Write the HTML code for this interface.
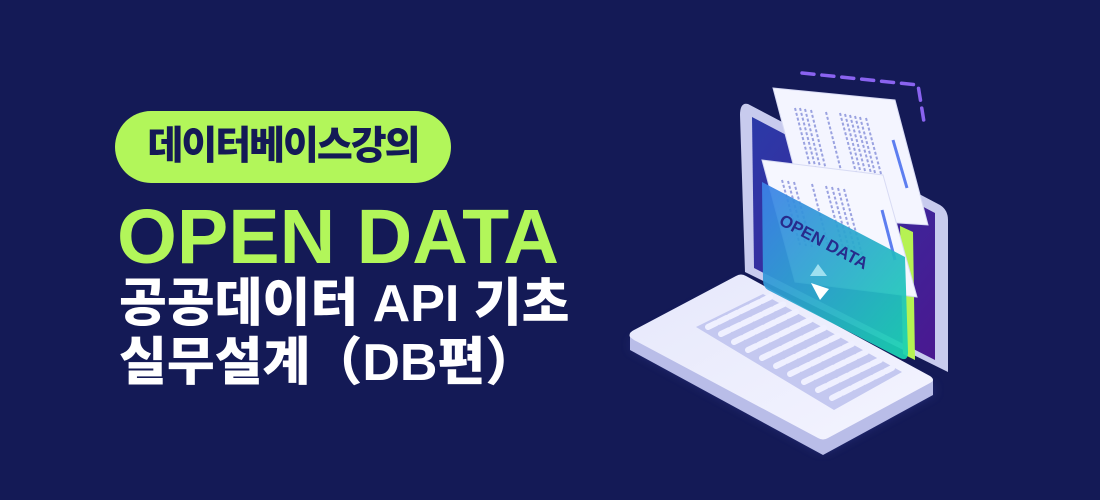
<!DOCTYPE html>
<html><head><meta charset="utf-8"><style>
html,body{margin:0;padding:0}
body{width:1100px;height:500px;background:#141a56;position:relative;overflow:hidden;font-family:"Liberation Sans","Noto Sans CJK KR",sans-serif}
.pill{position:absolute;left:115px;top:111px;width:336px;height:72px;border-radius:36px;background:#b2f65a;color:#141a56;font-weight:900;font-size:39px;line-height:72px;text-align:center;letter-spacing:-2px}
.big{position:absolute;left:117px;top:192px;color:#b2f65a;font-weight:bold;font-size:77px;line-height:90px;white-space:nowrap}
.k{position:absolute;left:119px;color:#fff;font-weight:900;font-size:52px;line-height:58px;white-space:nowrap;letter-spacing:0px}
svg{position:absolute;left:0;top:0}
</style></head><body>
<div class="pill">데이터베이스강의</div>
<div class="big">OPEN DATA</div>
<div class="k" style="top:275px">공공데이터 API 기초</div>
<div class="k" style="top:334px">실무설계（DB편）</div>
<svg width="1100" height="500" viewBox="0 0 1100 500">
<defs>
<linearGradient id="scr" x1="0" y1="0" x2="1" y2="1"><stop offset="0" stop-color="#2b3aa8"/><stop offset="1" stop-color="#4a1890"/></linearGradient>
<linearGradient id="fold" x1="0" y1="0" x2="1" y2="1"><stop offset="0" stop-color="#3d80e8"/><stop offset="1" stop-color="#18d6b0"/></linearGradient>
<linearGradient id="base" x1="0" y1="0" x2="1" y2="1"><stop offset="0" stop-color="#e6e8fb"/><stop offset="1" stop-color="#f4f4ff"/></linearGradient>
<filter id="gl"><feGaussianBlur stdDeviation="6"/></filter>
</defs>
<path d="M802 73 L918 85 L924 122" fill="none" stroke="#8a63f0" stroke-width="3.5" stroke-dasharray="12 8" stroke-linecap="round"/>
<path d="M748 104 L940 205 Q948 210 948 220 L948 372 L745 272 L740 115 Q740 102 748 104Z" fill="#c8cbee"/>
<path d="M752 117 L935 213 L935 360 L754 268Z" fill="url(#scr)"/>
<path d="M773 88 L895 100 L928 225 L807 217Z" fill="#f4f5ff" stroke="#d8dbf4" stroke-width="1"/>
<g stroke="#9aa2e0" stroke-width="2" stroke-dasharray="3 2">
<path d="M795 108 L815 185"/><path d="M800 108 L820 185"/><path d="M805 109 L825 186"/><path d="M811 110 L830 186"/><path d="M826 112 L846 190"/><path d="M840 113 L862 195"/><path d="M845 114 L867 196"/><path d="M850 115 L872 197"/><path d="M855 116 L878 198"/><path d="M860 117 L882 199"/><path d="M866 118 L888 200"/></g>
<path d="M893 140 L907 188" stroke="#5d7ef0" stroke-width="3"/>
<path d="M900 226 L913 232 L915 360 L903 354Z" fill="#b6f253"/>
<path d="M762 160 L883 175 L917 297 L795 282Z" fill="#f6f7ff" stroke="#d8dbf4"/>
<g stroke="#9aa2e0" stroke-width="2" stroke-dasharray="3 2">
<path d="M782 180 L800 245"/><path d="M788 181 L806 246"/><path d="M794 182 L812 247"/><path d="M812 184 L828 245"/><path d="M826 186 L845 255"/><path d="M832 187 L851 256"/><path d="M838 188 L857 257"/><path d="M844 189 L863 258"/></g>
<path d="M882 210 L895 260" stroke="#5d7ef0" stroke-width="3"/>
<path d="M630 345 L740 285 L935 390 L823 450Z" fill="#5560d0" opacity="0.5" filter="url(#gl)"/>
<path d="M630 337 L630 350 L823 455 L933 395 L933 380Z" fill="#b9bde8"/>
<path d="M630 337 Q628 333 634 330 L736 276 Q741 273 746 276 L930 376 Q936 380 930 383 L828 438 Q823 441 818 438 L634 340Z" fill="url(#base)"/>
<path d="M696 327 L763 294 L902 372 L834 410Z" fill="#c4c8f0"/>
<g stroke="#eff0ff" stroke-width="6" stroke-dasharray="9 3" stroke-linecap="round">
<path d="M708 327 L770 297"/><path d="M721 334 L784 304"/><path d="M734 342 L798 311"/><path d="M748 350 L812 319"/><path d="M762 358 L826 327"/><path d="M776 366 L840 335"/><path d="M790 374 L854 343"/><path d="M804 382 L868 351"/><path d="M818 390 L882 359"/><path d="M832 398 L892 368"/></g>
<path d="M762 182 L905 257 L908 352 Q908 362 900 358 L768 290 Q763 287 763 280Z" fill="url(#fold)" opacity="0.93"/>
<text x="0" y="0" transform="translate(778 224) rotate(28)" font-family="Liberation Sans,sans-serif" font-weight="bold" font-size="17" fill="#272b8c">OPEN DATA</text>
<path d="M818 264 L827 276 L810 276Z" fill="#9fe0f0"/>
<path d="M811 283 L829 289 L820 300Z" fill="#fff"/>
</svg>
</body></html>
